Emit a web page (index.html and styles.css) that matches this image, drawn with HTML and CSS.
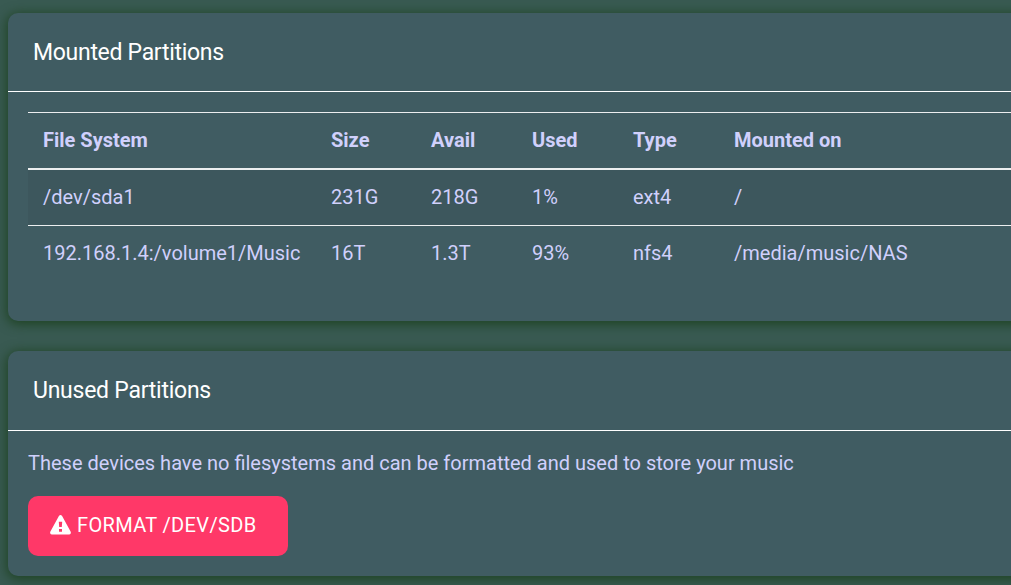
FILE: index.html
```html
<!DOCTYPE html>
<html lang="en">
    <head>
        <meta charset="UTF-8" />
        <meta name="viewport" content="width=device-width, initial-scale=1.0" />
        <title>Partitions</title>
        <link rel="stylesheet" href="styles.css">
    </head>
    <body>
        <main class="content">
            <!-- mounted -->
            <section class="card">
                <header class="card-header">
                    <h4 class="tit-mounted">Mounted Partitions</h4>
                </header>
                <div class="card-body card-body-table">
                    <table class="table">
                        <colgroup>
                            <col class="col-fs">
                            <col class="col-size">
                            <col class="col-avail">
                            <col class="col-used">
                            <col class="col-type">
                            <col>
                        </colgroup>
                        <thead>
                            <tr>
                                <th>File System</th>
                                <th>Size</th>
                                <th>Avail</th>
                                <th>Used</th>
                                <th>Type</th>
                                <th>Mounted on</th>
                            </tr>
                        </thead>
                        <tbody>
                            <tr>
                                <td>/dev/sda1</td>
                                <td>231G</td>
                                <td>218G</td>
                                <td>1%</td>
                                <td>ext4</td>
                                <td>/</td>
                            </tr>
                            <tr>
                                <td>192.168.1.4:/volume1/Music</td>
                                <td>16T</td>
                                <td>1.3T</td>
                                <td>93%</td>
                                <td>nfs4</td>
                                <td>/media/music/NAS</td>
                            </tr>
                        </tbody>
                    </table>
                </div>
            </section>

            <!-- unused -->
            <section class="card">
                <header class="card-header card-header-unused">
                    <h4 class="tit-unused">Unused Partitions</h4>
                </header>
                <div class="card-body">
                    <p>These devices have no filesystems and can be formatted and used to store your music</p>
                    <button type="button" class="btn">
                        <svg class="icon" viewBox="0 0 21 20" aria-hidden="true">
                            <path fill="#fff" fill-rule="evenodd" d="M8.9 1.1Q10.5-1 12.1 1.1L20.7 16.8Q21.4 19.2 19.2 19.5H1.8Q-.4 19.2.3 16.8ZM8.8 6.8L9.2 12H11.8L12.2 6.8ZM9 13.9V16.8H12V13.9Z"/>
                        </svg>
                        <span>FORMAT /DEV/SDB</span>
                    </button>
                </div>
            </section>
        </main>
    </body>
</html>
```
FILE: styles.css
```css
* {
    box-sizing: border-box;
}

body {
    margin: 0;
    height: 585px;
    overflow: hidden;
    background: #395a52;
    color: #d0d0fc;
    font-family: Roboto, sans-serif;
    font-size: 20px;
    line-height: 30px;
}

/* wider than the window, runs off the right side */
.content {
    display: flex;
    flex-direction: column;
    gap: 30px;
    width: 1060px;
    padding: 13px 8px 20px;
}

.card {
    border-radius: 10px;
    background: #405c62;
    box-shadow: 0 2px 12px 1px #1d4221;
}

.card-header {
    display: flex;
    align-items: center;
    height: 79px;
    padding: 1px 25px 0;
    border-bottom: 1px solid #fff;
}

.card-header-unused {
    height: 80px;
    padding-top: 0;
}

h4 {
    margin: 0;
    color: #fff;
    font-size: 23px;
    font-weight: 400;
}

.tit-mounted {
    letter-spacing: -0.3px;
}

.tit-unused {
    letter-spacing: -0.25px;
}

.card-body {
    padding: 17px 20px 20px;
}

.card-body-table {
    height: 229px;
    padding-top: 20px;
}

/* table */
.table {
    width: 100%;
    table-layout: fixed;
    border-spacing: 0;
}

.col-fs {
    width: 288px;
}

.col-size {
    width: 100px;
}

.col-avail,
.col-used,
.col-type {
    width: 101px;
}

th,
td {
    height: 56px;
    padding: 0 15px 2px;
    border-top: 1px solid #eceeef;
    text-align: left;
    white-space: nowrap;
}

th {
    height: 58px;
    border-bottom: 2px solid #eceeef;
}

tbody tr:first-child td {
    height: 55px;
    border-top: 0;
    background: #3d575d;
}

p {
    margin: 0 0 18px;
}

/* format button */
.btn {
    display: flex;
    align-items: center;
    gap: 6px;
    width: 260px;
    height: 60px;
    padding: 0 22px 2px;
    border: 0;
    border-radius: 10px;
    background: #ff3868;
    color: #fff;
    font-family: Roboto, sans-serif;
    font-size: 20px;
    letter-spacing: 0.35px;
    white-space: nowrap;
}

.icon {
    flex: none;
    width: 21px;
    height: 20px;
}
```
